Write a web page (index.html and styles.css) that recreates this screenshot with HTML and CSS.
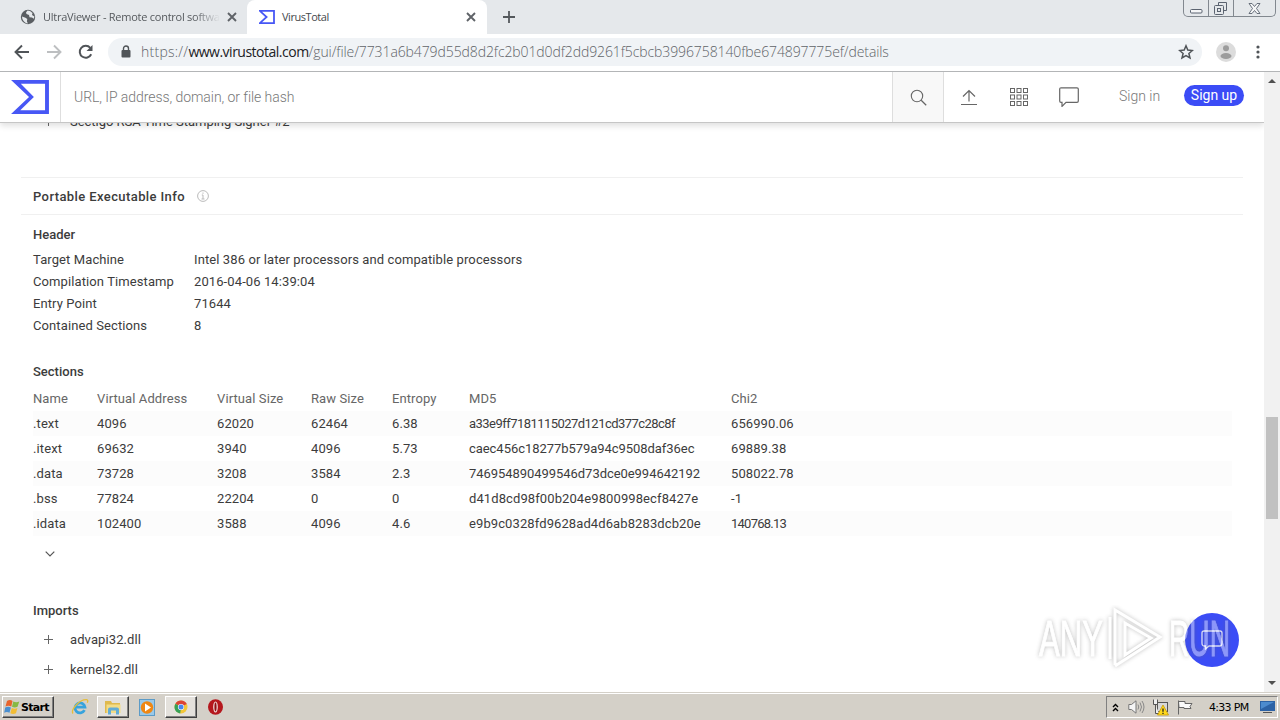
FILE: index.html
```html
<!DOCTYPE html>
<html lang="en">
  <head>
    <meta charset="UTF-8" />
    <meta name="viewport" content="width=device-width, initial-scale=1.0" />
    <title>VirusTotal</title>
    <link rel="stylesheet" href="styles.css">
  </head>
  <body>
    <!-- Tab strip -->
    <div class="tab-strip">
      <div class="tab">
        <svg class="favicon" width="16" height="16" viewBox="0 0 16 16">
          <circle cx="8" cy="8" r="7.2" fill="#5a5e62" />
          <path d="M2 7.5l3.500 1.200 1.800 1.400-.4 2.200 1 2.200-2-.6C3.500 12.600 2 10.500 2 7.500zM7.500 1.500l-1.500 2 .5 1.500 2.500 1 .5 2.200 2.500.3 1.800 1.200.6-2.200L12 6l.5-2-2.500-2z" fill="#e6e9ec" />
        </svg>
        <span class="tab-title faded">UltraViewer - Remote control softwa</span>
        <svg class="tab-close" width="10" height="10" viewBox="0 0 10 10"><path d="M1 1l8 8M9 1l-8 8" stroke="#5f6368" stroke-width="1.9" /></svg>
      </div>
      <div class="tab active">
        <svg class="favicon" width="16" height="16" viewBox="0 0 40 36">
          <path d="M2 2.500H37.500V33.500H2L19 18z" fill="none" stroke="#4757f5" stroke-width="4.500" />
        </svg>
        <span class="tab-title">VirusTotal</span>
        <svg class="tab-close" width="10" height="10" viewBox="0 0 10 10"><path d="M1 1l8 8M9 1l-8 8" stroke="#5f6368" stroke-width="1.9" /></svg>
      </div>
      <svg class="new-tab" width="12" height="12" viewBox="0 0 12 12"><path d="M6 0v12M0 6h12" stroke="#54585c" stroke-width="1.8" /></svg>
      <div class="window-buttons">
        <span class="win-btn">
          <svg width="13" height="6" viewBox="0 0 13 6"><rect x=".5" y="1.500" width="11.500" height="3.500" rx="1" fill="#f5f6f7" stroke="#5b6370" /></svg>
        </span>
        <span class="win-btn restore">
          <svg width="14" height="13" viewBox="0 0 14 13" fill="none" stroke="#5b6370"><path d="M4.500 3.500V.5h8v8h-3" /><rect x=".5" y="3.500" width="9" height="9" rx="1" /><rect x="3.500" y="6.500" width="3" height="3" /></svg>
        </span>
        <span class="win-btn close">
          <svg width="13" height="11" viewBox="0 0 13 11"><path d="M1 .5h3l2.500 3 2.500-3h3L8.500 5.500l3.500 5H9L6.500 7.500 4 10.500H1l3.500-5z" fill="#f5f6f7" stroke="#5b6370" stroke-width=".9" /></svg>
        </span>
      </div>
    </div>

    <!-- Address bar -->
    <div class="toolbar">
      <svg class="nav-icon" width="16" height="16" viewBox="0 0 16 16"><path d="M15 8H2M8 1.500L1.500 8 8 14.500" fill="none" stroke="#505458" stroke-width="1.900" /></svg>
      <svg class="nav-icon" width="16" height="16" viewBox="0 0 16 16"><path d="M1 8h13M8 1.500L14.500 8 8 14.500" fill="none" stroke="#bdbfc1" stroke-width="1.900" /></svg>
      <svg class="nav-icon" width="16" height="16" viewBox="0 0 16 16"><path d="M13.200 10.300A6 6 0 1 1 12.300 3.800" fill="none" stroke="#505458" stroke-width="2" /><path d="M14.500 1v6h-6z" fill="#505458" /></svg>
      <div class="address">
        <svg class="lock" width="10" height="13" viewBox="0 0 10 13"><path d="M2.500 6V3.500a2.500 2.500 0 0 1 5 0V6" fill="none" stroke="#505458" stroke-width="1.400" /><rect x=".5" y="5" width="9" height="7.500" rx="1" fill="#505458" /></svg>
        <span class="url">https://<b>www.virustotal.com</b><span class="url-path">/gui/file/7731a6b479d55d8d2fc2b01d0df2dd9261f5cbcb3996758140fbe674897775ef/details</span></span>
        <svg class="star" width="16" height="16" viewBox="0 0 16 16"><path d="M8 1.800l1.800 4.300 4.600.4-3.500 3 1.100 4.500L8 11.600 4 14l1.100-4.500-3.500-3 4.600-.4z" fill="none" stroke="#505458" stroke-width="1.500" /></svg>
      </div>
      <svg class="avatar" width="20" height="20" viewBox="0 0 20 20"><circle cx="10" cy="10" r="10" fill="#dcdcdc" /><circle cx="10" cy="6.300" r="3" fill="#9c9c9c" /><ellipse cx="10" cy="14" rx="5.500" ry="3" fill="#9c9c9c" /></svg>
      <svg class="menu" width="4" height="14" viewBox="0 0 4 14" fill="#505458"><circle cx="2" cy="2" r="1.600" /><circle cx="2" cy="7" r="1.600" /><circle cx="2" cy="12" r="1.600" /></svg>
    </div>

    <div class="viewport">
      <div class="page">
        <!-- VirusTotal header -->
        <header class="header">
          <div class="logo">
            <svg width="38" height="34" viewBox="0 0 39 35"><path d="M0 0H39V35H0L18.500 17.500zM10 3.800L23.500 17.500 9.500 31.200H35V3.800z" fill="#4757f5" fill-rule="evenodd" /></svg>
          </div>
          <div class="search-input">URL, IP address, domain, or file hash</div>
          <div class="search-btn">
            <svg width="17" height="17" viewBox="0 0 17 17" fill="none" stroke="#666"><circle cx="7" cy="7" r="5.700" stroke-width="1.100" /><path d="M11.200 11.200l5 5" stroke-width="1.300" /></svg>
          </div>
          <svg class="upload" width="16" height="17" viewBox="0 0 16 17" fill="none" stroke="#666" stroke-width="1.200"><path d="M8 12.500V1.500M2 7.500l6-6 6 6M0 15.500h16" /></svg>
          <svg class="apps" width="20" height="20" viewBox="0 0 20 20" fill="none" stroke="#666">
            <rect x="1.500" y="1.500" width="4" height="4" /><rect x="8" y="1.500" width="4" height="4" /><rect x="14.500" y="1.500" width="4" height="4" />
            <rect x="1.500" y="8" width="4" height="4" /><rect x="8" y="8" width="4" height="4" /><rect x="14.500" y="8" width="4" height="4" />
            <rect x="1.500" y="14.500" width="4" height="4" /><rect x="8" y="14.500" width="4" height="4" /><rect x="14.500" y="14.500" width="4" height="4" />
          </svg>
          <svg class="comment" width="20" height="20" viewBox="0 0 20 20" fill="none" stroke="#666" stroke-width="1.200"><path d="M2 .8h16q1.300 0 1.300 1.300v12q0 1.300-1.300 1.300H7l-4 4v-4H2Q.7 15.400.7 14.100V2.100Q.7.800 2 .8z" /></svg>
          <span class="sign-in">Sign in</span>
          <span class="sign-up">Sign up</span>
        </header>

        <!-- File details -->
        <main class="details">
          <div class="expand-row signer">
            <span class="plus"></span>
            <span class="signer-name">Sectigo RSA Time Stamping Signer #2</span>
          </div>

          <h2 class="section-title">
            <span class="section-name">Portable Executable Info</span>
            <svg width="12" height="12" viewBox="0 0 12 12" fill="none" stroke="#bbb"><circle cx="6" cy="6" r="5.400" /><path d="M6 2.500v1.300M6 5v4M4.800 5H6M4.500 9h3" /></svg>
          </h2>

          <h3 class="sub-title header-title">Header</h3>
          <dl class="info-grid">
            <dt>Target Machine</dt>
            <dd>Intel 386 or later processors and compatible processors</dd>
            <dt>Compilation Timestamp</dt>
            <dd>2016-04-06 14:39:04</dd>
            <dt>Entry Point</dt>
            <dd>71644</dd>
            <dt>Contained Sections</dt>
            <dd>8</dd>
          </dl>

          <h3 class="sub-title sections-title">Sections</h3>
          <table class="sections">
            <colgroup>
              <col class="col-name" />
              <col class="col-address" />
              <col class="col-vsize" />
              <col class="col-raw" />
              <col class="col-entropy" />
              <col class="col-md5" />
              <col />
            </colgroup>
            <thead>
              <tr><th>Name</th><th>Virtual Address</th><th>Virtual Size</th><th>Raw Size</th><th>Entropy</th><th>MD5</th><th>Chi2</th></tr>
            </thead>
            <tbody>
              <tr><td>.text</td><td>4096</td><td>62020</td><td>62464</td><td>6.38</td><td class="hash-narrow">a33e9ff7181115027d121cd377c28c8f</td><td>656990.06</td></tr>
              <tr><td>.itext</td><td>69632</td><td>3940</td><td>4096</td><td>5.73</td><td class="hash">caec456c18277b579a94c9508daf36ec</td><td>69889.38</td></tr>
              <tr><td>.data</td><td>73728</td><td>3208</td><td>3584</td><td>2.3</td><td class="hash">746954890499546d73dce0e994642192</td><td>508022.78</td></tr>
              <tr><td>.bss</td><td>77824</td><td>22204</td><td>0</td><td>0</td><td>d41d8cd98f00b204e9800998ecf8427e</td><td>-1</td></tr>
              <tr><td>.idata</td><td>102400</td><td>3588</td><td>4096</td><td>4.6</td><td>e9b9c0328fd9628ad4d6ab8283dcb20e</td><td class="chi-narrow">140768.13</td></tr>
            </tbody>
          </table>
          <svg class="more" width="10" height="6" viewBox="0 0 10 6"><path d="M.7.700L5 5 9.300.700" fill="none" stroke="#555" stroke-width="1.200" /></svg>

          <h3 class="sub-title imports-title">Imports</h3>
          <div class="expand-row"><span class="plus"></span>advapi32.dll</div>
          <div class="expand-row"><span class="plus"></span>kernel32.dll</div>
        </main>
      </div>

      <div class="scrollbar">
        <span class="arrow up"></span>
        <span class="thumb"></span>
        <span class="arrow down"></span>
      </div>

      <div class="chat">
        <svg width="22" height="20" viewBox="0 0 22 20"><path d="M3 1h16q2 0 2 2v10q0 3-2 3H8l-3.500 3V16H3q-2 0-2-3V3q0-2 2-2z" fill="none" stroke="#e3e5ff" stroke-width="1.300" /></svg>
      </div>

      <svg class="watermark" width="210" height="70" viewBox="0 0 210 70">
        <g class="mark">
          <text x="9" y="51" textLength="64" lengthAdjust="spacingAndGlyphs">ANY</text>
          <text x="139" y="51" textLength="61" lengthAdjust="spacingAndGlyphs">RUN</text>
          <path d="M80 54V12M85 60V5l45 27-45 29M95 18v32l26-17z" fill="none" stroke-width="3" />
        </g>
      </svg>
    </div>

    <!-- Taskbar -->
    <div class="taskbar">
      <div class="start">
        <svg width="17" height="17" viewBox="0 0 17 17">
          <path d="M3 2q3-2 5.500 0L7.300 7.500Q4.500 6 1.500 7.500z" fill="#e8642c" />
          <path d="M9.300 2.500q3 1.500 6 0l-1.800 5.300q-2.700 1.500-5.500 0z" fill="#87b944" />
          <path d="M1.200 8.500q3-1.500 5.700 0l-1.400 5.300q-2.700-1.600-5.300 0z" fill="#4a8fd0" />
          <path d="M7.800 9q3 1.500 5.600 0L12 14.300q-3 1.500-5.700 0z" fill="#f2bd35" />
        </svg>
        <b>Start</b>
      </div>
      <span class="task ie">
        <svg width="18" height="18" viewBox="0 0 18 18"><path d="M13.500 12.200A5 5 0 1 1 14 9.200H5" fill="none" stroke="#36a3dd" stroke-width="2.700" /><path d="M2 15.500C-.5 12 8 1.500 15.500 1.700c1.500.2 1.500 1.500.8 3" fill="none" stroke="#e5bd3a" stroke-width="1.300" /></svg>
      </span>
      <span class="task raised">
        <svg width="18" height="17" viewBox="0 0 18 17"><path d="M1 2h6l1 2h8v10H1z" fill="#dfb94e" /><path d="M2.500 5.500h14V14h-14z" fill="#f3dc86" /><path d="M4 15.500v-5q0-2 2-2h7q2 0 2 2v5h-3v-4H7v4z" fill="#62acd6" /></svg>
      </span>
      <span class="task">
        <svg width="16" height="17" viewBox="0 0 16 17"><rect x=".5" y=".5" width="15" height="16" fill="#9ac9e9" stroke="#5c9bc7" /><circle cx="8" cy="8.500" r="6.200" fill="#ef8713" /><path d="M6 4.500v8l6-4z" fill="#fff" /></svg>
      </span>
      <span class="task raised chrome">
        <svg width="14" height="14" viewBox="0 0 14 14"><circle cx="7" cy="7" r="6.500" fill="#f3c73a" /><path d="M7 7L1.400 3.700A6.500 6.500 0 0 1 12.800 4z" fill="#dc4436" /><path d="M7 7L1.400 3.700A6.500 6.500 0 0 0 6.200 13.500z" fill="#37a157" /><circle cx="7" cy="7" r="3.100" fill="#fff" /><circle cx="7" cy="7" r="2.500" fill="#4886ee" /></svg>
      </span>
      <span class="task">
        <svg width="15" height="16" viewBox="0 0 15 16"><ellipse cx="7.500" cy="8" rx="7.500" ry="7.800" fill="#b5171d" /><ellipse cx="7.500" cy="8" rx="2.300" ry="5.500" fill="#f5e5e3" /><ellipse cx="7.500" cy="8" rx="1.100" ry="4.400" fill="#8f1015" /></svg>
      </span>
      <div class="tray">
        <svg width="7" height="9" viewBox="0 0 7 9"><path d="M1 4l2.500-2.500L6 4M1 8l2.500-2.500L6 8" fill="none" stroke="#000" stroke-width="1.400" /></svg>
        <svg class="sound" width="17" height="14" viewBox="0 0 17 14"><path d="M.8 4.500h2.700L8 .8v12.400L3.500 9.500H.8z" fill="#f5f5f5" stroke="#777" /><path d="M10 4.500q1.500 2.500 0 5M12 2.500q3 4.500 0 9M14 1q4 6 0 12" fill="none" stroke="#888" /></svg>
        <svg class="network" width="17" height="17" viewBox="0 0 17 17"><rect x="5.500" y="3.500" width="10" height="9" fill="#d8d8d8" stroke="#555" /><path d="M1.500.5v5h4v-5M3.500 5.500v9H7" fill="#eee" stroke="#555" /><path d="M11 6l5.500 10h-11z" fill="#ffd91c" stroke="#c89a00" stroke-width=".8" /><path d="M11 9.500v3.300M11 13.700v1.200" stroke="#222" stroke-width="1.300" /></svg>
        <svg class="flag" width="16" height="15" viewBox="0 0 16 15"><path d="M1.500.5v14M1.500 1.500H8v2h7l-2 3 1 2H7v-1H2z" fill="#fafafa" stroke="#666" /></svg>
        <span class="clock">4:33 PM</span>
        <svg class="desktop" width="15" height="14" viewBox="0 0 15 14"><path d="M0 1h15v10H0z" fill="#2c62a5" /><path d="M1 2h13L1 9z" fill="#4c8bce" /><path d="M3 12h9v1H3z" fill="#555" /></svg>
      </div>
    </div>
  </body>
</html>
```

FILE: styles.css
```css
* {
  margin: 0;
  padding: 0;
  box-sizing: border-box;
}

body {
  width: 1280px;
  height: 720px;
  overflow: hidden;
  display: flex;
  flex-direction: column;
  background-color: #fff;
  font-family: Roboto, sans-serif;
  font-size: 13px;
  color: #3c3c3c;
}

svg {
  display: block;
  flex: none;
}

/* Browser tabs */
.tab-strip {
  height: 34px;
  flex: none;
  display: flex;
  align-items: center;
  background-color: #e5e8eb;
}

.tab {
  width: 247px;
  height: 34px;
  padding: 0 10px 0 20px;
  display: flex;
  align-items: center;
  font-family: "Open Sans", sans-serif;
  font-size: 11px;
  letter-spacing: -0.45px;
  color: #55595d;
}

.tab.active {
  width: 240px;
  padding: 0 11px 0 12px;
  background-color: #fff;
  border-radius: 8px 8px 0 0;
  color: #45494d;
}

.tab-title {
  flex: 1;
  margin: 0 7px;
  padding-bottom: 1px;
  white-space: nowrap;
}

.tab-title.faded {
  letter-spacing: -0.25px;
  -webkit-mask-image: linear-gradient(to right, #000 85%, transparent);
  mask-image: linear-gradient(to right, #000 85%, transparent);
}

.new-tab {
  margin-left: 16px;
}

.window-buttons {
  align-self: flex-start;
  height: 17px;
  margin-left: auto;
  margin-right: 4px;
  display: flex;
  border: 1px solid #82888f;
  border-top: none;
  border-radius: 0 0 5px 5px;
}

.win-btn {
  width: 25px;
  display: flex;
  align-items: flex-end;
  justify-content: center;
  padding-bottom: 2px;
  border-right: 1px solid #82888f;
}

.win-btn.restore {
  padding-bottom: 1px;
}

.win-btn.close {
  width: 41px;
  border-right: none;
}

/* Address bar */
.toolbar {
  height: 38px;
  flex: none;
  padding: 0 20px 2px 14px;
  display: flex;
  align-items: center;
  border-bottom: 1px solid #b3b5b7;
}

.nav-icon {
  margin-right: 16px;
}

.address {
  width: 1094px;
  height: 28px;
  margin-left: -2px;
  padding: 0 8px 0 13px;
  display: flex;
  align-items: center;
  background-color: #f0f3f6;
  border-radius: 14px;
}

.url {
  flex: 1;
  margin-left: 10px;
  font-family: "Open Sans", sans-serif;
  font-size: 14px;
  font-weight: 300;
  letter-spacing: 0.25px;
  color: #5f6368;
  white-space: nowrap;
}

.url b {
  font-weight: 400;
  letter-spacing: -0.5px;
  color: #202124;
}

.url-path {
  letter-spacing: -0.1px;
}

.avatar {
  margin-left: 14px;
}

.menu {
  margin-left: auto;
}

.viewport {
  position: relative;
  height: 620px;
  flex: none;
  display: flex;
  overflow: hidden;
}

.page {
  width: 1264px;
  overflow: hidden;
}

/* VirusTotal header */
.header {
  position: relative;
  z-index: 1;
  height: 51px;
  display: flex;
  align-items: center;
  background-color: #fff;
  border-bottom: 1px solid #c6c6c6;
  box-shadow: 0 3px 6px rgba(0, 0, 0, 0.12);
}

.logo {
  width: 61px;
  height: 50px;
  padding: 8px 0 0 11px;
  border-right: 1px solid #dedede;
}

.search-input {
  width: 831px;
  padding-left: 13px;
  font-size: 14px;
  font-weight: 300;
  letter-spacing: -0.06px;
  color: #777;
}

.search-btn {
  width: 52px;
  height: 50px;
  display: flex;
  align-items: center;
  justify-content: center;
  background-color: #f8f8f8;
  border-left: 1px solid #dedede;
  border-right: 1px solid #dedede;
}

.upload {
  margin-left: 17px;
}

.apps {
  margin-left: 32px;
}

.comment {
  margin-left: 30px;
}

.sign-in {
  width: 65px;
  margin-left: 40px;
  padding-bottom: 3px;
  font-size: 14px;
  font-weight: 300;
  color: #777;
}

.sign-up {
  width: 60px;
  height: 21px;
  margin-bottom: 3px;
  line-height: 21px;
  text-align: center;
  font-size: 14px;
  color: #fff;
  background-color: #3b4cf6;
  border-radius: 11px;
}

/* Details */
.details {
  padding: 0 21px;
}

.expand-row {
  height: 30px;
  padding-left: 23px;
  display: flex;
  align-items: center;
  letter-spacing: 0.1px;
}

.plus {
  width: 9px;
  height: 9px;
  margin-right: 17px;
  background: linear-gradient(#666, #666) center / 9px 1px no-repeat,
    linear-gradient(#666, #666) center / 1px 9px no-repeat;
}

.signer {
  margin-top: -17px;
  letter-spacing: -0.02px;
}

.section-title {
  height: 38px;
  margin-top: 41px;
  padding-left: 12px;
  display: flex;
  align-items: center;
  gap: 12px;
  border-top: 1px solid #f0f0f0;
  border-bottom: 1px solid #f0f0f0;
  font-size: 13px;
  font-weight: 500;
  letter-spacing: 0.4px;
}

.sub-title {
  height: 20px;
  padding-left: 12px;
  line-height: 20px;
  font-size: 13px;
  font-weight: 500;
}

.header-title {
  margin-top: 10px;
}

.info-grid {
  margin-top: 4px;
  padding-left: 12px;
  display: grid;
  grid-template-columns: 161px 1fr;
  grid-auto-rows: 22px;
  line-height: 22px;
  letter-spacing: 0.1px;
}

.sections-title {
  margin-top: 25px;
}

.sections {
  width: 1199px;
  margin: 4px 0 0 12px;
  table-layout: fixed;
  border-collapse: collapse;
}

.sections th,
.sections td {
  height: 25px;
  text-align: left;
  letter-spacing: 0.1px;
}

.sections th {
  font-weight: 400;
  color: #666;
}

.sections .hash {
  letter-spacing: -0.05px;
}

.sections .hash-narrow {
  letter-spacing: -0.54px;
}

.sections .chi-narrow {
  letter-spacing: -0.75px;
}

.sections tbody tr:nth-child(odd) {
  background-color: #fcfcfc;
}

.col-name {
  width: 64px;
}

.col-address {
  width: 120px;
}

.col-vsize {
  width: 94px;
}

.col-raw {
  width: 81px;
}

.col-entropy {
  width: 77px;
}

.col-md5 {
  width: 262px;
}

.more {
  margin: 15px 0 0 24px;
}

.imports-title {
  margin: 44px 0 3px;
}

/* Scrollbar */
.scrollbar {
  width: 16px;
  padding: 7px 0 7px;
  display: flex;
  flex-direction: column;
  align-items: center;
  background-color: #f1f1f1;
}

.arrow {
  border: 4px solid transparent;
}

.arrow.up {
  border-top: none;
  border-bottom-color: #505050;
}

.arrow.down {
  margin-top: auto;
  border-bottom: none;
  border-top-color: #505050;
}

.thumb {
  width: 12px;
  height: 102px;
  margin-top: 334px;
  background-color: #c1c1c1;
}

/* Chat button and watermark float over the page */
.chat {
  position: absolute;
  right: 41px;
  bottom: 25px;
  width: 54px;
  height: 54px;
  display: flex;
  align-items: center;
  justify-content: center;
  background-color: #3b4cf6;
  border-radius: 50%;
}

.watermark {
  position: absolute;
  right: 40px;
  bottom: 17px;
}

.mark {
  font-family: "Liberation Sans", sans-serif;
  font-size: 50px;
  fill: #fff;
  stroke: #fff;
  opacity: 0.42;
  filter: drop-shadow(0 0 2px #666);
}

.mark text {
  stroke-width: 1px;
}

/* Taskbar */
.taskbar {
  height: 28px;
  flex: none;
  padding: 3px 2px 0 2px;
  display: flex;
  align-items: flex-start;
  background-color: #d4d0c8;
  border-top: 1px solid #d4d0c8;
  box-shadow: inset 0 1px #fff;
}

.start {
  width: 52px;
  height: 22px;
  padding-left: 1px;
  display: flex;
  align-items: center;
  font-family: "DejaVu Sans", sans-serif;
  font-size: 11px;
  letter-spacing: -0.7px;
  color: #000;
  border: 1px solid;
  border-color: #fff #404040 #404040 #fff;
  box-shadow: inset -1px -1px #808080;
}

.task {
  width: 34px;
  height: 22px;
  display: flex;
  align-items: center;
  justify-content: center;
}

.task.ie {
  width: 32px;
  margin: 0 1px 0 10px;
}

.task.raised {
  width: 32px;
  margin-right: 1px;
  background-color: #e4e1dc;
  border: 1px solid;
  border-color: #fff #404040 #404040 #fff;
  box-shadow: inset -1px -1px #808080;
}

.task.chrome {
  margin-left: 1px;
}

.tray {
  height: 22px;
  width: 172px;
  margin-left: auto;
  padding: 0 2px 0 5px;
  display: flex;
  align-items: center;
  border: 1px solid;
  border-color: #808080 #fff #fff #808080;
  font-family: "DejaVu Sans", sans-serif;
  font-size: 11px;
  color: #000;
}

.sound {
  margin-left: 9px;
}

.network {
  margin-left: 7px;
}

.flag {
  margin-left: 8px;
}

.clock {
  margin-left: 16px;
  letter-spacing: -0.7px;
  white-space: nowrap;
}

.desktop {
  margin-left: auto;
}
```
